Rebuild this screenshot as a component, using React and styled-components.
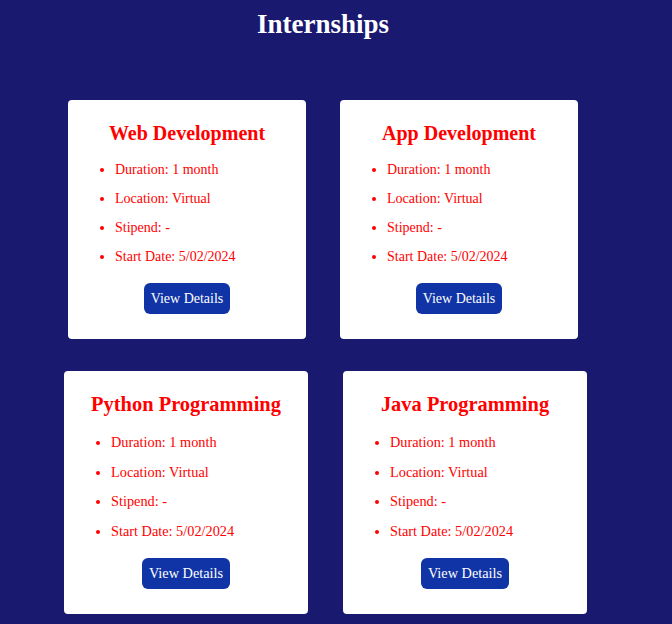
import React from "react";
import styled, { createGlobalStyle } from "styled-components";

const GlobalStyle = createGlobalStyle`
  html, body {
    margin: 0;
    padding: 0;
    background: #191970;
  }
  body {
    font-family: "Liberation Serif", "Times New Roman", serif;
  }
`;

const Page = styled.div`
  width: 646px;
  min-height: 624px;
  display: flex;
  flex-direction: column;
  align-items: center;
`;

const Heading = styled.h1`
  margin: 9px 0 0;
  font-size: 27px;
  line-height: 31px;
  font-weight: bold;
  color: #ffffff;
`;

const Grid = styled.div`
  margin-top: 60px;
  display: flex;
  flex-direction: column;
  gap: 32px;
`;

const Row = styled.div`
  display: flex;
  justify-content: center;
  gap: ${(p) => p.$gap}px;
  margin-left: ${(p) => p.$shift}px;
`;

const Card = styled.div`
  box-sizing: border-box;
  width: ${(p) => p.$width}px;
  font-size: ${(p) => p.$fs}px;
  background: #ffffff;
  border-radius: 4px;
  padding: 1.57em 20px 1.75em;
  display: flex;
  flex-direction: column;
  align-items: center;
  color: #ff0000;
`;

const Title = styled.h2`
  margin: 0;
  font-size: 1.43em;
  line-height: 1.15;
  font-weight: bold;
  color: #ff0000;
  text-align: center;
  white-space: nowrap;
`;

const List = styled.ul`
  align-self: stretch;
  margin: 1.22em 0 0;
  padding-left: 27px;
  list-style: disc;
`;

const Item = styled.li`
  line-height: 1.15;
  margin-bottom: 0.92em;
  &:last-child {
    margin-bottom: 0;
  }
`;

const Button = styled.button`
  margin-top: 1.3em;
  font-family: "Liberation Serif", "Times New Roman", serif;
  font-size: 1em;
  line-height: 1.15;
  padding: 0.53em 0.5em;
  border: none;
  border-radius: 6px;
  background: #1034a6;
  color: #ffffff;
  cursor: pointer;
`;

const rows = [
  {
    gap: 34,
    shift: 0,
    width: 238,
    fs: 14,
    items: ["Web Development", "App Development"],
  },
  {
    gap: 35,
    shift: 5,
    width: 244,
    fs: 14.3,
    items: ["Python Programming", "Java Programming"],
  },
];

const details = [
  "Duration: 1 month",
  "Location: Virtual",
  "Stipend: -",
  "Start Date: 5/02/2024",
];

export default function App() {
  return (
    <>
      <GlobalStyle />
      <Page>
        <Heading>Internships</Heading>
        <Grid>
          {rows.map((row, i) => (
            <Row key={i} $gap={row.gap} $shift={row.shift}>
              {row.items.map((name) => (
                <Card key={name} $width={row.width} $fs={row.fs}>
                  <Title>{name}</Title>
                  <List>
                    {details.map((d) => (
                      <Item key={d}>{d}</Item>
                    ))}
                  </List>
                  <Button>View Details</Button>
                </Card>
              ))}
            </Row>
          ))}
        </Grid>
      </Page>
    </>
  );
}
